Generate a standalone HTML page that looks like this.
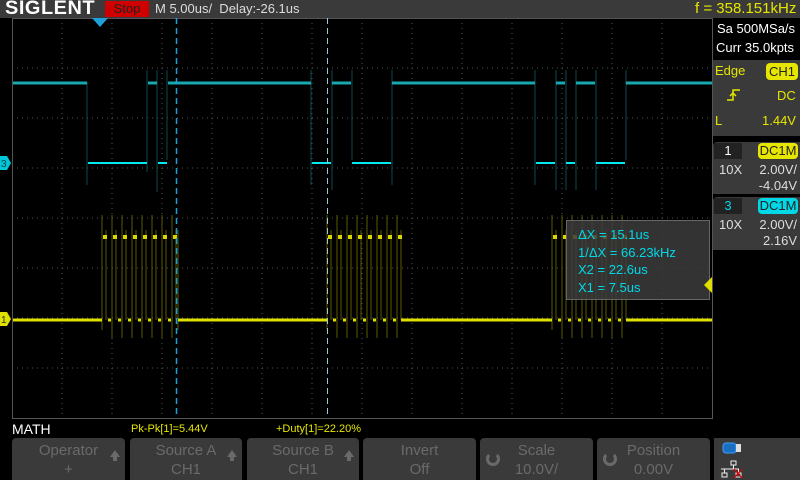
<!DOCTYPE html>
<html><head><meta charset="utf-8"><style>
*{margin:0;padding:0;box-sizing:border-box}
body{width:800px;height:480px;background:#000;overflow:hidden;position:relative;font-family:"Liberation Sans",sans-serif}
.a{position:absolute;white-space:nowrap}
.btn{position:absolute;top:438px;height:42px;background:#3a3a3a;border-radius:4px 4px 0 0;color:#6a6a6a;font-size:15px;text-align:center;line-height:19px;padding-top:3px}
.btn .up{position:absolute;right:5px;top:12px;width:0;height:0;border-left:5px solid transparent;border-right:5px solid transparent;border-bottom:7px solid #6a6a6a}
.btn .up:after{content:"";position:absolute;left:-2px;top:6px;width:4px;height:5px;background:#6a6a6a}
.knob{position:absolute;left:6px;top:14px;width:14px;height:14px;border:3px solid #6a6a6a;border-radius:50%;border-top-color:transparent}
</style></head><body>
<div class="a" style="left:0;top:0;width:800px;height:18px;background:#3a3a3a"></div>
<div class="a" style="left:5px;top:-2px;font-size:19px;font-weight:bold;color:#fff;letter-spacing:0.5px;transform:scaleX(1.05);transform-origin:left">SIGLENT</div>
<div class="a" style="left:105px;top:1px;width:44px;height:16px;background:#d00000;color:#222;font-size:13px;text-align:center;line-height:16px">Stop</div>
<div class="a" style="left:155px;top:1px;font-size:13px;color:#ddd">M 5.00us/&nbsp; Delay:-26.1us</div>
<div class="a" style="left:695px;top:0px;font-size:15px;color:#e6e600">f = 358.151kHz</div>

<svg class="a" style="left:0;top:0" width="800" height="480">
<g stroke="#555" stroke-width="1" stroke-dasharray="1 4">
<line x1="62" y1="18" x2="62" y2="418"/><line x1="112" y1="18" x2="112" y2="418"/><line x1="162" y1="18" x2="162" y2="418"/><line x1="212" y1="18" x2="212" y2="418"/><line x1="262" y1="18" x2="262" y2="418"/><line x1="312" y1="18" x2="312" y2="418"/><line x1="412" y1="18" x2="412" y2="418"/><line x1="462" y1="18" x2="462" y2="418"/><line x1="512" y1="18" x2="512" y2="418"/><line x1="562" y1="18" x2="562" y2="418"/><line x1="612" y1="18" x2="612" y2="418"/><line x1="662" y1="18" x2="662" y2="418"/>
<line x1="12" y1="68" x2="712" y2="68"/><line x1="12" y1="118" x2="712" y2="118"/><line x1="12" y1="168" x2="712" y2="168"/><line x1="12" y1="268" x2="712" y2="268"/><line x1="12" y1="318" x2="712" y2="318"/><line x1="12" y1="368" x2="712" y2="368"/>
<line x1="12" y1="218" x2="712" y2="218"/><line x1="362" y1="18" x2="362" y2="418"/>
</g>
<rect x="12.5" y="18.5" width="700" height="400" fill="none" stroke="#555"/>
<g stroke="#0a4a50" stroke-width="1" fill="none">
<path d="M87 82V185 M147 70V172 M157 70V192 M167 70V160 M311 70V185 M332 70V190 M352 70V160 M392 70V185 M535 70V185 M556 70V190 M566 70V190 M576 70V190 M596 70V190 M626 70V160"/>
</g>
<g stroke="#1aa8b0" stroke-width="3" fill="none">
<path d="M13 83H87 M148 83H157 M168 83H311 M332 83H351 M392 83H535 M556 83H565 M576 83H595 M626 83H712"/>
</g>
<g stroke="#00e8f0" stroke-width="2" fill="none">
<path d="M88 163H147 M158 163H167 M312 163H331 M352 163H391 M536 163H555 M566 163H575 M596 163H625"/>
</g>
<g stroke="#5a5a00" stroke-width="1">
<path d="M102 215V330 M112 215V338 M122 215V338 M132 215V338 M142 215V338 M152 215V338 M162 215V338 M172 215V338 M178 230V330
M327 215V330 M337 215V338 M347 215V338 M357 215V338 M367 215V338 M377 215V338 M387 215V338 M397 215V338
M552 215V330 M562 215V338 M572 215V338 M582 215V338 M592 215V338 M602 215V338 M612 215V338 M622 215V338"/>
<path d="M106 230V320 M116 230V320 M126 230V320 M136 230V320 M146 230V320 M156 230V320 M166 230V320 M176 230V320
M331 230V320 M341 230V320 M351 230V320 M361 230V320 M371 230V320 M381 230V320 M391 230V320 M401 230V320
M556 230V320 M566 230V320 M576 230V320 M586 230V320 M596 230V320 M606 230V320 M616 230V320 M626 230V320"/>
</g>
<g stroke="#e0e000" stroke-width="3">
<path d="M13 320H102 M178 320H327 M401 320H552 M626 320H712"/>
<path d="M108 320H111 M118 320H121 M128 320H131 M138 320H141 M148 320H151 M158 320H161 M168 320H171
M333 320H336 M343 320H346 M353 320H356 M363 320H366 M373 320H376 M383 320H386 M393 320H396
M558 320H561 M568 320H571 M578 320H581 M588 320H591 M598 320H601 M608 320H611 M618 320H621"/>
</g>
<g stroke="#d8d800" stroke-width="4">
<path d="M103 237H107 M113 237H117 M123 237H127 M133 237H137 M143 237H147 M153 237H157 M163 237H167 M173 237H177
M328 237H332 M338 237H342 M348 237H352 M358 237H362 M368 237H372 M378 237H382 M388 237H392 M398 237H402
M553 237H557 M563 237H567 M573 237H577 M583 237H587 M593 237H597 M603 237H607 M613 237H617 M623 237H627"/>
</g>
<line x1="176.5" y1="18" x2="176.5" y2="418" stroke="#1ea0d8" stroke-width="1.5" stroke-dasharray="6 4"/>
<line x1="327.5" y1="18" x2="327.5" y2="418" stroke="#9cc8d8" stroke-width="1" stroke-dasharray="6 4"/>
<path d="M92 18H108L100 27Z" fill="#1ea0d8"/>
<path d="M0 156H7L11 163L7 170H0Z" fill="#00c8d8"/>
<text x="1" y="167" font-size="10" fill="#003840" font-family="Liberation Sans">3</text>
<path d="M0 312H7L11 319L7 326H0Z" fill="#e0e000"/>
<text x="1" y="323" font-size="10" fill="#333" font-family="Liberation Sans">1</text>
</svg>

<div class="a" style="left:566px;top:220px;width:144px;height:80px;background:rgba(60,60,60,0.85);border:1px solid #666"></div>
<div class="a" style="left:578px;top:226px;font-size:13px;color:#00d8e8;line-height:17.5px">ΔX = 15.1us<br>1/ΔX = 66.23kHz<br>X2 = 22.6us<br>X1 = 7.5us</div>
<svg class="a" style="left:700px;top:274px" width="14" height="22"><path d="M12 3L4 11L12 19Z" fill="#e0e000"/></svg>

<div class="a" style="left:712px;top:18px;width:88px;height:40px;border-left:1px solid #555"></div>
<div class="a" style="left:717px;top:21px;font-size:13px;color:#fff">Sa 500MSa/s</div>
<div class="a" style="left:716px;top:40px;font-size:13px;color:#fff">Curr 35.0kpts</div>
<div class="a" style="left:713px;top:60px;width:87px;height:76px;background:#3a3a3a"></div>
<div class="a" style="left:715px;top:63px;font-size:13px;color:#e6e600">Edge</div>
<div class="a" style="left:766px;top:63px;width:32px;height:17px;background:#e6e600;border-radius:4px;color:#222;font-size:13px;text-align:center;line-height:17px">CH1</div>
<svg class="a" style="left:726px;top:88px" width="16" height="14"><path d="M1 12H7V2H14" stroke="#e6e600" stroke-width="1.5" fill="none"/><path d="M4 8L7 5L10 8" stroke="#e6e600" stroke-width="1.5" fill="none"/></svg>
<div class="a" style="left:777px;top:88px;font-size:13px;color:#e6e600">DC</div>
<div class="a" style="left:715px;top:113px;font-size:13px;color:#e6e600">L</div>
<div class="a" style="left:762px;top:113px;font-size:13px;color:#e6e600">1.44V</div>

<div class="a" style="left:713px;top:142px;width:87px;height:52px;background:#3a3a3a;border-radius:4px 0 0 0"></div>
<div class="a" style="left:714px;top:143px;width:28px;height:16px;background:#222;color:#fff;font-size:13px;text-align:center;line-height:16px">1</div>
<div class="a" style="left:758px;top:143px;width:40px;height:16px;background:#e6e600;border-radius:4px;color:#222;font-size:13px;text-align:center;line-height:16px">DC1M</div>
<div class="a" style="left:719px;top:162px;font-size:13px;color:#ddd">10X</div>
<div class="a" style="right:3px;top:162px;font-size:13px;color:#ddd;text-align:right;line-height:16px">2.00V/<br>-4.04V</div>

<div class="a" style="left:713px;top:197px;width:87px;height:53px;background:#3a3a3a;border-radius:4px 0 0 0"></div>
<div class="a" style="left:714px;top:198px;width:28px;height:16px;background:#222;color:#00d8e8;font-size:13px;text-align:center;line-height:16px">3</div>
<div class="a" style="left:758px;top:198px;width:40px;height:16px;background:#00d8e8;border-radius:4px;color:#222;font-size:13px;text-align:center;line-height:16px">DC1M</div>
<div class="a" style="left:719px;top:217px;font-size:13px;color:#ddd">10X</div>
<div class="a" style="right:3px;top:217px;font-size:13px;color:#ddd;text-align:right;line-height:16px">2.00V/<br>2.16V</div>

<div class="a" style="left:12px;top:421px;font-size:14px;color:#fff">MATH</div>
<div class="a" style="left:131px;top:423px;font-size:11px;color:#e6e600">Pk-Pk[1]=5.44V</div>
<div class="a" style="left:276px;top:423px;font-size:11px;color:#e6e600">+Duty[1]=22.20%</div>

<div class="btn" style="left:12px;width:113px">Operator<br>+<i class="up"></i></div>
<div class="btn" style="left:130px;width:112px">Source A<br>CH1<i class="up"></i></div>
<div class="btn" style="left:247px;width:112px">Source B<br>CH1<i class="up"></i></div>
<div class="btn" style="left:363px;width:113px">Invert<br>Off</div>
<div class="btn" style="left:480px;width:113px">Scale<br>10.0V/<i class="knob"></i></div>
<div class="btn" style="left:597px;width:113px">Position<br>0.00V<i class="knob"></i></div>
<div class="a" style="left:714px;top:438px;width:86px;height:42px;background:#3a3a3a"></div>
<svg class="a" style="left:714px;top:438px" width="86" height="42">
<rect x="9" y="5" width="13" height="10" rx="3" fill="#1a6ec0" stroke="#3aa0ff"/>
<rect x="22" y="6" width="5" height="8" fill="#ddd"/>
<path d="M17 23h5v4h-5z M8 35h5v4h-5z M22 35h5v4h-5z M19.5 27v4 M7 31h18 M10.5 31v4 M24.5 31v4" stroke="#eee" fill="none"/>
<path d="M20 31l8 9 M28 31l-8 9" stroke="#d00" stroke-width="1.3"/>
</svg>
</body></html>
